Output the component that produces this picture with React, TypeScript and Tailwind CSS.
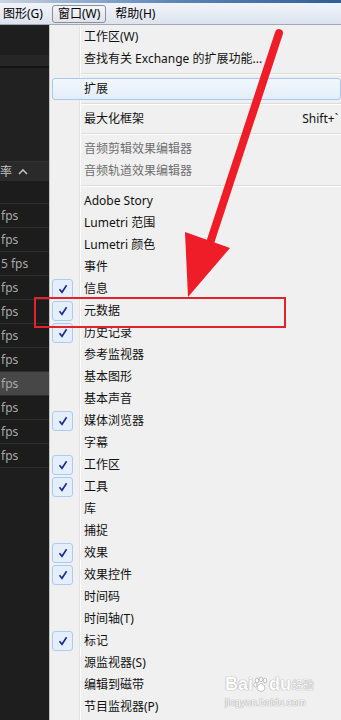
import React from "react";

type Item =
  | { sep: true }
  | { sep?: false; label: string; check?: boolean; gray?: boolean; shortcut?: string; hover?: boolean };

const items: Item[] = [
  { label: "工作区(W)" },
  { label: "查找有关 Exchange 的扩展功能..." },
  { sep: true },
  { label: "扩展", hover: true },
  { sep: true },
  { label: "最大化框架", shortcut: "Shift+`" },
  { sep: true },
  { label: "音频剪辑效果编辑器", gray: true },
  { label: "音频轨道效果编辑器", gray: true },
  { sep: true },
  { label: "Adobe Story" },
  { label: "Lumetri 范围" },
  { label: "Lumetri 颜色" },
  { label: "事件" },
  { label: "信息", check: true },
  { label: "元数据", check: true },
  { label: "历史记录", check: true },
  { label: "参考监视器" },
  { label: "基本图形" },
  { label: "基本声音" },
  { label: "媒体浏览器", check: true },
  { label: "字幕" },
  { label: "工作区", check: true },
  { label: "工具", check: true },
  { label: "库" },
  { label: "捕捉" },
  { label: "效果", check: true },
  { label: "效果控件", check: true },
  { label: "时间码" },
  { label: "时间轴(T)" },
  { label: "标记", check: true },
  { label: "源监视器(S)" },
  { label: "编辑到磁带" },
  { label: "节目监视器(P)" },
];

function Check() {
  return (
    <div className="flex h-[20px] w-[21px] items-center justify-center rounded-[3px] border border-[#a9cbf3] bg-[#e5eefb]">
      <svg width="10" height="10" viewBox="0 0 10 10">
        <path d="M1.5 5.2 L4 8.3 L8.6 1.2" fill="none" stroke="#1b2a8f" strokeWidth="1.6" strokeLinejoin="miter" />
      </svg>
    </div>
  );
}

const fpsRows = [
  { t: "fps" },
  { t: "fps" },
  { t: "5 fps" },
  { t: "fps" },
  { t: "fps" },
  { t: "fps" },
  { t: "fps" },
  { t: "fps", hl: true },
  { t: "fps" },
  { t: "fps" },
  { t: "fps" },
];

export default function App() {
  return (
    <div className="relative h-[720px] w-[341px] overflow-hidden bg-[#1e1e1e] font-['Noto_Sans','Noto_Sans_CJK_SC',sans-serif] text-[12px]">
      {/* title strip */}
      <div className="h-[3px] bg-gradient-to-r from-[#c9d3e2] via-[#5d86b8] to-[#2f5f98]" />
      {/* menu bar */}
      <div className="flex h-[22px] items-center gap-[4px] border-b border-[#a3a7ae] bg-gradient-to-b from-[#f1f4fa] to-[#dde3ef] text-[#000]">
        <div className="ml-[-2px] flex h-[18px] items-center px-[5px] leading-none">图形(G)</div>
        <div className="flex h-[18px] items-center rounded-[3px] border border-[#8a8f99] bg-gradient-to-b from-[#f4f6fa] to-[#dfe3ea] px-[5px] leading-none">窗口(W)</div>
        <div className="flex h-[18px] items-center px-[5px] leading-none">帮助(H)</div>
      </div>

      <div className="flex">
        {/* left dark panel */}
        <div className="w-[49px] shrink-0 text-[#a9a9a9]">
          <div className="h-[30px] bg-[#1e1e1e]" />
          <div className="h-[11px] bg-[#262626]" />
          <div className="h-[2px] bg-[#141414]" />
          <div className="h-[93px] bg-[#212121]" />
          <div className="flex h-[20px] items-center border-t border-[#333] bg-[#2a2a2a] text-[#c4c4c4]">
            <span className="leading-none">率</span>
            <svg className="ml-[6px]" width="10" height="7" viewBox="0 0 10 7">
              <path d="M1 6 L5 2 L9 6" fill="none" stroke="#bdbdbd" strokeWidth="1.6" />
            </svg>
          </div>
          <div className="h-[23px] border-b border-[#2e2e2e] bg-[#1c1c1c]" />
          {fpsRows.map((r, i) => (
            <div
              key={i}
              className={`flex h-[24px] items-center border-b border-[#2e2e2e] pl-[1px] ${r.hl ? "bg-[#474747]" : "bg-[#1c1c1c]"}`}
            >
              <span className="whitespace-nowrap leading-none">{r.t}</span>
            </div>
          ))}
          <div className="h-[300px] bg-[#1e1e1e]" />
        </div>

        {/* dropdown menu */}
        <div className="relative flex-1 border-l border-[#c4c4c4] bg-[#f0f0f0] pt-[1px] text-[#111]">
          {items.map((it, i) => {
            if (it.sep) {
              return (
                <div key={i} className="flex h-[8px]">
                  <div className="w-[30px] shrink-0 border-r border-[#e2e3e3]" />
                  <div className="flex flex-1 items-center border-l border-white">
                    <div className="h-[2px] w-full border-t border-b border-t-[#dcdcdc] border-b-white" />
                  </div>
                </div>
              );
            }
            if (it.hover) {
              return (
                <div key={i} className="flex h-[22px] pl-[2px]">
                  <div className="flex flex-1 items-center rounded-[3px] border border-[#a8c8ee] bg-gradient-to-b from-[#f3f7fd] to-[#e4edf9] pl-[31px] leading-none">
                    {it.label}
                  </div>
                </div>
              );
            }
            return (
              <div key={i} className="flex h-[22px]">
                <div className="flex w-[30px] shrink-0 items-center border-r border-[#e2e3e3] pl-[2px]">
                  {it.check ? <Check /> : null}
                </div>
                <div
                  className={`flex flex-1 items-center justify-between border-l border-white pl-[3px] pr-[3px] leading-none ${
                    it.gray ? "text-[#6f6f6f]" : ""
                  }`}
                >
                  <span className="whitespace-nowrap">{it.label}</span>
                  {it.shortcut ? <span className="whitespace-nowrap">{it.shortcut}</span> : null}
                </div>
              </div>
            );
          })}
          <div className="flex h-[40px]">
            <div className="w-[30px] shrink-0 border-r border-[#e2e3e3]" />
            <div className="flex-1 border-l border-white" />
          </div>
        </div>
      </div>

      {/* red highlight rectangle */}
      <div className="pointer-events-none absolute left-[34px] top-[297px] h-[31px] w-[252px] border-2 border-[#e3222b]" />

      {/* red arrow */}
      <svg className="pointer-events-none absolute left-0 top-0" width="341" height="720" viewBox="0 0 341 720">
        <line x1="279" y1="33" x2="210" y2="243" stroke="#ee1d27" strokeWidth="8" strokeLinecap="round" />
        <polygon points="185,232 230,248 188,297" fill="#ee1d27" />
      </svg>

      {/* watermark */}
      <div className="pointer-events-none absolute left-[225px] top-[675px] flex flex-col items-start text-white [text-shadow:0_0_1px_#9a9a9a,0_0_1px_#9a9a9a]">
        <div className="flex items-center font-['Liberation_Sans',sans-serif] text-[18px] font-bold leading-none">
          <span>Bai</span>
          <svg width="16" height="17" viewBox="0 0 20 20">
            <g fill="#fff" stroke="#a0a0a0" strokeWidth="0.8">
              <ellipse cx="5" cy="5" rx="2.2" ry="3" />
              <ellipse cx="10" cy="3.5" rx="2.2" ry="3" />
              <ellipse cx="15" cy="5" rx="2.2" ry="3" />
              <ellipse cx="3" cy="10.5" rx="2" ry="2.6" />
              <path d="M10 9 C6 9 4 15 6 17 C8 19 12 19 14 17 C16 15 14 9 10 9 Z" />
            </g>
          </svg>
          <span>du</span>
          <span className="ml-[1px] font-['Noto_Sans_CJK_SC',sans-serif] text-[11px] font-normal">经验</span>
        </div>
        <div className="mt-[5px] font-['Liberation_Sans',sans-serif] text-[10px] leading-none">jingyan.baidu.com</div>
      </div>
    </div>
  );
}
